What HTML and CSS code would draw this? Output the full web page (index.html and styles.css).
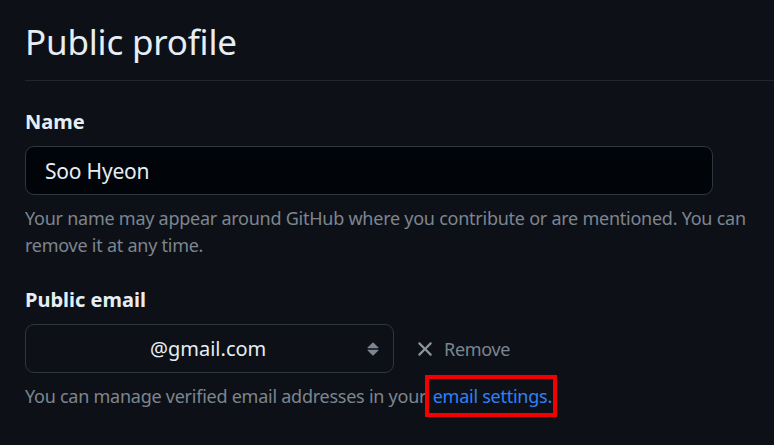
FILE: index.html
```html
<!DOCTYPE html>
<html lang="en">
<head>
<meta charset="utf-8">
<title>Public profile</title>
<link rel="stylesheet" href="styles.css">
</head>
<body>
<main class="page">
  <div class="subhead">
    <h2 class="subhead-title">Public profile</h2>
  </div>
  <div class="form-group">
    <label class="form-label" for="name">Name</label>
    <input class="form-control name-input" id="name" type="text" value="Soo Hyeon">
    <p class="note">Your name may appear around GitHub where you contribute or are mentioned. You can remove it at any time.</p>
  </div>
  <div class="form-group email-group">
    <label class="form-label" for="email">Public email</label>
    <div class="email-row">
      <div class="select" id="email">
        <span class="select-value">@gmail.com</span>
        <svg class="select-caret" width="12" height="16" viewBox="0 0 12 16" aria-hidden="true"><path fill="currentColor" d="M0.6 6.6 L5.4 1.8 Q6 1.2 6.6 1.8 L11.4 6.6 Q11.8 7.2 11.1 7.2 H0.9 Q0.2 7.2 0.6 6.6 Z M0.6 9.4 L5.4 14.2 Q6 14.8 6.6 14.2 L11.4 9.4 Q11.8 8.8 11.1 8.8 H0.9 Q0.2 8.8 0.6 9.4 Z"/></svg>
      </div>
      <button class="btn-remove" type="button">
        <svg width="16" height="16" viewBox="0 0 16 16" aria-hidden="true"><path fill="currentColor" d="M3.72 3.72a.75.75 0 011.06 0L8 6.94l3.22-3.22a.75.75 0 111.06 1.06L9.06 8l3.22 3.22a.75.75 0 11-1.06 1.06L8 9.06l-3.22 3.22a.75.75 0 01-1.06-1.06L6.94 8 3.72 4.78a.75.75 0 010-1.06z"/></svg>
        <span>Remove</span>
      </button>
    </div>
    <p class="note">You can manage verified email addresses in your <a class="link highlighted" href="#">email settings.</a></p>
  </div>
</main>
</body>
</html>
```
FILE: styles.css
```css
* { box-sizing: border-box; }
html, body {
  margin: 0;
  background: #0d1117;
  color: #e6edf3;
  font-family: "Noto Sans", "Open Sans", sans-serif;
}
.page {
  padding-left: 25px;
  width: 774px;
  height: 445px;
  overflow: hidden;
}
.subhead {
  border-bottom: 1px solid #21262d;
  padding-top: 17px;
  padding-bottom: 14px;
  margin-bottom: 26px;
  margin-right: -25px;
}
.subhead-title {
  margin: 0;
  font-size: 35px;
  font-weight: 400;
  line-height: 1.4;
  letter-spacing: -0.2px;
}
.form-group { margin: 0; }
.form-label {
  display: block;
  font-size: 20px;
  font-weight: 700;
  line-height: 30px;
  margin-bottom: 9px;
}
.form-control {
  display: block;
  font-family: inherit;
  color: #e6edf3;
  background: #010409;
  border: 1.5px solid #30363d;
  border-radius: 9px;
  outline: none;
}
.name-input {
  width: 688px;
  height: 49px;
  padding: 0 19px;
  font-size: 21px;
  letter-spacing: -0.2px;
}
.note {
  margin: 10px 0 0;
  width: 740px;
  font-size: 18px;
  line-height: 27px;
  color: #7d8590;
  letter-spacing: -0.25px;
}
.email-group { margin-top: 26px; }
.email-row {
  display: flex;
  align-items: center;
  gap: 22px;
}
.select {
  width: 369px;
  height: 49px;
  border: 1.5px solid #30363d;
  border-radius: 9px;
  background: #0d1117;
  display: flex;
  align-items: center;
  padding: 0 14px 0 124px;
  font-size: 20px;
}
.select-value { flex: 1; }
.select-caret { color: #7d8590; width: 12px; height: 16px; }
.btn-remove {
  display: flex;
  align-items: center;
  gap: 7px;
  background: none;
  border: 0;
  padding: 0;
  color: #7d8590;
  font-family: inherit;
  font-size: 18px;
  letter-spacing: -0.3px;
}
.btn-remove svg { width: 24px; height: 24px; color: #8b949e; margin-left: -3px; }
.link { color: #2f81f7; text-decoration: none; }
.highlighted {
  display: inline-block;
  border: 4px solid #f50000;
  padding: 5px 1px 4px 4px;
  margin: -9px 0 -12px -6px;
  line-height: 25px;
}
```
